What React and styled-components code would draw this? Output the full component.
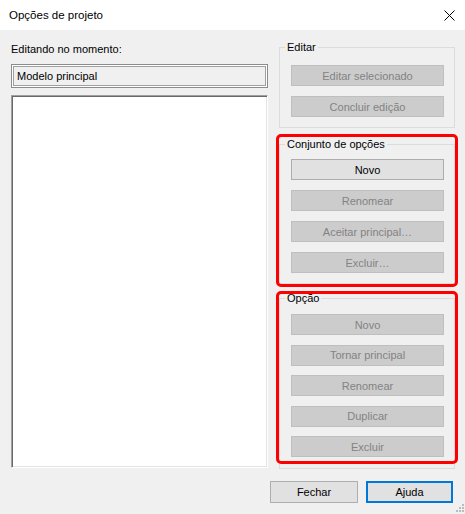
import styled, { createGlobalStyle } from "styled-components";

const GlobalStyle = createGlobalStyle`
  html, body {
    margin: 0;
    padding: 0;
    background: #f0f0f0;
  }
  body {
    font-family: "Segoe UI", "Liberation Sans", Arial, sans-serif;
    font-size: 11px;
    color: #000;
  }
`;

const Window = styled.div`
  position: relative;
  width: 465px;
  height: 514px;
  display: flex;
  flex-direction: column;
  background: #f0f0f0;
  overflow: hidden;
`;

const TitleBar = styled.div`
  height: 30px;
  flex: none;
  background: #fff;
  display: flex;
  align-items: center;
  justify-content: space-between;
  padding: 0 10px 0 9px;
  font-size: 11.5px;
  line-height: 16px;
`;

const CloseIcon = styled.svg`
  display: block;
  width: 11px;
  height: 11px;
`;

const Body = styled.div`
  display: grid;
  grid-template-columns: 257px 176px;
  column-gap: 11px;
  padding: 11px 0 0 11px;
`;

const Column = styled.div`
  display: flex;
  flex-direction: column;
`;

const Label = styled.div`
  line-height: 16px;
  height: 16px;
`;

const ReadOnlyField = styled.div`
  margin-top: 7px;
  height: 24px;
  box-sizing: border-box;
  border: 1px solid #8c8c8c;
  box-shadow: inset 0 0 0 1px #fff, inset 0 0 0 2px #a0a0a0;
  padding: 0 5px;
  display: flex;
  align-items: center;
  line-height: 16px;
`;

const ListBox = styled.div`
  margin-top: 7px;
  height: 373px;
  box-sizing: border-box;
  background: #fff;
  border-style: solid;
  border-width: 1px;
  border-color: #a0a0a0 #fff #fff #a0a0a0;
  box-shadow: inset 1px 1px 0 #696969, inset -1px -1px 0 #e3e3e3;
`;

const Highlight = styled.div`
  position: relative;
  margin-top: ${({ $mt }) => $mt}px;

  &::after {
    content: "";
    position: absolute;
    top: ${({ $top }) => $top}px;
    bottom: ${({ $bottom }) => $bottom}px;
    left: -3px;
    right: -3px;
    border: 3px solid #ff0000;
    border-radius: 5px;
    pointer-events: none;
  }
`;

const Group = styled.fieldset`
  margin: 0;
  border: 1px solid #dcdcdc;
  padding: 0;
  min-width: 0;
`;

const Legend = styled.legend`
  margin-left: 5px;
  padding: 0 2px;
  font-size: 11px;
  line-height: 12px;
  height: 12px;
`;

const Stack = styled.div`
  display: flex;
  flex-direction: column;
  gap: ${({ $gap }) => $gap}px;
  padding: ${({ $pt }) => $pt}px 10px ${({ $pb }) => $pb}px 11px;
`;

const Button = styled.button`
  height: 21px;
  box-sizing: border-box;
  margin: 0;
  padding: 0;
  font-family: inherit;
  font-size: 11px;
  line-height: 16px;
  text-align: center;
  background: ${({ disabled }) => (disabled ? "#cccccc" : "#e1e1e1")};
  color: ${({ disabled }) => (disabled ? "#838383" : "#000")};
  border: 1px solid ${({ disabled }) => (disabled ? "#bfbfbf" : "#adadad")};
  border-radius: 0;
  cursor: default;
`;

const Footer = styled.div`
  display: flex;
  justify-content: flex-end;
  gap: 8px;
  padding: 12px 12px 0 0;
`;

const DialogButton = styled(Button)`
  width: ${({ $w }) => $w}px;
  height: 22px;
  border: ${({ $primary }) => ($primary ? "2px solid #0078d7" : "1px solid #adadad")};
`;

const Grip = styled.svg`
  position: absolute;
  right: 1px;
  bottom: 2px;
  width: 9px;
  height: 9px;
`;

const editButtons = [
  { label: "Editar selecionado", disabled: true },
  { label: "Concluir edição", disabled: true },
];

const setButtons = [
  { label: "Novo", disabled: false },
  { label: "Renomear", disabled: true },
  { label: "Aceitar principal…", disabled: true },
  { label: "Excluir…", disabled: true },
];

const optionButtons = [
  { label: "Novo", disabled: true },
  { label: "Tornar principal", disabled: true },
  { label: "Renomear", disabled: true },
  { label: "Duplicar", disabled: true },
  { label: "Excluir", disabled: true },
];

const renderButtons = (list) =>
  list.map((b) => (
    <Button key={b.label} disabled={b.disabled}>
      {b.label}
    </Button>
  ));

export default function App() {
  return (
    <>
      <GlobalStyle />
      <Window>
        <TitleBar>
          <span>Opções de projeto</span>
          <CloseIcon viewBox="0 0 11 11">
            <path d="M0.5 0.5 L10.5 10.5 M10.5 0.5 L0.5 10.5" stroke="#000" strokeWidth="1" fill="none" />
          </CloseIcon>
        </TitleBar>

        <Body>
          <Column>
            <Label>Editando no momento:</Label>
            <ReadOnlyField>Modelo principal</ReadOnlyField>
            <ListBox />
          </Column>

          <Column>
            <Group>
              <Legend>Editar</Legend>
              <Stack $pt={12} $pb={10} $gap={10}>
                {renderButtons(editButtons)}
              </Stack>
            </Group>

            <Highlight $mt={10} $top={-4} $bottom={-3}>
              <Group>
                <Legend>Conjunto de opções</Legend>
                <Stack $pt={9} $pb={10} $gap={10}>
                  {renderButtons(setButtons)}
                </Stack>
              </Group>
            </Highlight>

            <Highlight $mt={8} $top={-1} $bottom={5}>
              <Group>
                <Legend>Opção</Legend>
                <Stack $pt={10} $pb={11} $gap={9.5}>
                  {renderButtons(optionButtons)}
                </Stack>
              </Group>
            </Highlight>
          </Column>
        </Body>

        <Footer>
          <DialogButton $w={88}>Fechar</DialogButton>
          <DialogButton $w={87} $primary>
            Ajuda
          </DialogButton>
        </Footer>

        <Grip viewBox="0 0 9 9">
          <g fill="#bcbcbc">
            <rect x="7" y="1" width="2" height="2" />
            <rect x="4" y="4" width="2" height="2" />
            <rect x="7" y="4" width="2" height="2" />
            <rect x="1" y="7" width="2" height="2" />
            <rect x="4" y="7" width="2" height="2" />
            <rect x="7" y="7" width="2" height="2" />
          </g>
        </Grip>
      </Window>
    </>
  );
}
